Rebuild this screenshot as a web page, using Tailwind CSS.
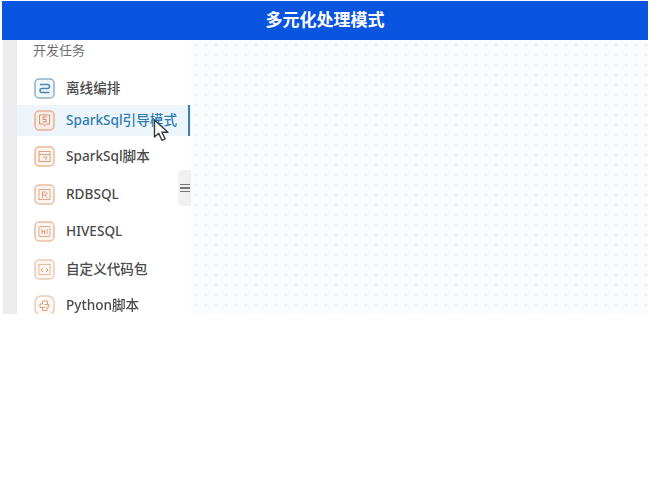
<!DOCTYPE html>
<html lang="en">
<head>
  <meta charset="UTF-8">
  <title>多元化处理模式</title>
  <script src="https://cdn.jsdelivr.net/npm/@tailwindcss/browser@4"></script>
</head>
<body class="bg-white font-['Noto_Sans','Noto_Sans_CJK_SC',sans-serif]">
  <div class="w-[649px] h-[480px] pt-px pl-[2px] pr-px overflow-hidden">
    <header class="h-[39px] bg-[#0a55df] flex items-center justify-center text-white text-[17px] font-bold font-['Liberation_Sans','Noto_Sans_CJK_SC',sans-serif]">多元化处理模式</header>
    <div class="flex h-[274px] overflow-hidden">
      <div class="w-px bg-white"></div>
      <div class="w-[14px] bg-[#ececee]"></div>
      <aside class="relative w-[174px] bg-white text-[13.6px] font-medium text-[#4a4a4a] [filter:blur(0.5px)]">
        <div class="h-[22px] pl-[16px] pt-[2px] text-[13px] font-normal text-[#707070] leading-[17px]">开发任务</div>

        <div class="mt-[10px] h-[33px] flex items-center pl-[17px] gap-[11px]">
          <svg class="w-[21px] h-[21px]" viewBox="0 0 21 21" fill="none" stroke="#8fb0ca" stroke-width="1.500"><rect x="1" y="1" width="19" height="19" rx="4" fill="#f1f6fa"/><path d="M6 6.500h7.500a2 2 0 0 1 0 4H8a2 2 0 0 0 0 4h7.500" stroke="#4f86ae"/></svg>
          <span>离线编排</span>
        </div>

        <div class="relative h-[31px] flex items-center pl-[17px] gap-[11px] bg-[#edf5fa] text-[#2f7db5]">
          <svg class="w-[21px] h-[21px]" viewBox="0 0 21 21" fill="none" stroke="#e3b295" stroke-width="1.500"><rect x="1" y="1" width="19" height="19" rx="4" fill="#f9ece3"/><path d="M5.500 5h10v9h-3l-2 2-2-2h-3z" stroke-width="1" stroke="#cf9775"/><path d="M12.500 7h-3.500v2.500h3V12H8.500" stroke="#c98c6a" stroke-width="1"/></svg>
          <span>SparkSql引导模式</span>
          <div class="absolute right-px top-0 w-[2.500px] h-[31px] bg-[#3d80ae]"></div>
        </div>

        <div class="h-[41px] flex items-center pl-[17px] gap-[11px]">
          <svg class="w-[21px] h-[21px]" viewBox="0 0 21 21" fill="none" stroke="#e8b99c" stroke-width="1.500"><rect x="1" y="1" width="19" height="19" rx="4" fill="#fcf3ed"/><rect x="5" y="5.500" width="11" height="10" stroke="#d9a17f" stroke-width="1"/><path d="M5 8.500h11M9 11h4l-1.500 3" stroke="#d9a17f" stroke-width="1"/></svg>
          <span>SparkSql脚本</span>
        </div>

        <div class="h-[35px] flex items-center pl-[17px] gap-[11px]">
          <svg class="w-[21px] h-[21px]" viewBox="0 0 21 21" fill="none" stroke="#e8bfa5" stroke-width="1.500"><rect x="1" y="1" width="19" height="19" rx="4" fill="#fcf4ee"/><rect x="5" y="5.500" width="11" height="10" stroke="#dcab8d" stroke-width="1"/><path d="M8.500 14V8h3a1.500 1.500 0 0 1 0 3h-3M11 11l2 3" stroke="#d9a17f" stroke-width="1"/></svg>
          <span>RDBSQL</span>
        </div>

        <div class="h-[39px] flex items-center pl-[17px] gap-[11px]">
          <svg class="w-[21px] h-[21px]" viewBox="0 0 21 21" fill="none" stroke="#e8bfa5" stroke-width="1.500"><rect x="1" y="1" width="19" height="19" rx="4" fill="#fcf4ee"/><rect x="5" y="5.500" width="11" height="10" rx="1" stroke="#dcab8d" stroke-width="1"/><path d="M8 8v5M13 8v5M8 10.500h2M10.500 9v4" stroke="#d9a17f" stroke-width="1"/></svg>
          <span>HIVESQL</span>
        </div>

        <div class="h-[36px] flex items-center pl-[17px] gap-[11px]">
          <svg class="w-[21px] h-[21px]" viewBox="0 0 21 21" fill="none" stroke="#ebcbb6" stroke-width="1.500"><rect x="1" y="1" width="19" height="19" rx="4" fill="#fcf6f1"/><rect x="5" y="5.500" width="11" height="10" stroke="#e3bca3" stroke-width="1"/><path d="M9 9l-2 2 2 2M12 9l2 2-2 2" stroke="#d9a17f" stroke-width="1"/></svg>
          <span>自定义代码包</span>
        </div>

        <div class="h-[37px] flex items-center pl-[17px] gap-[11px]">
          <svg class="w-[21px] h-[21px]" viewBox="0 0 21 21" fill="none" stroke="#ebcbb6" stroke-width="1.500"><rect x="1" y="1" width="19" height="19" rx="6" fill="#fdf8f4"/><path d="M13.500 9.500V6h-5v3H6v3.500h5M8.500 12v3.500h4.500V12h2V9.500h-4.500" stroke="#d9a17f" stroke-width="1"/></svg>
          <span>Python脚本</span>
        </div>

        <svg class="absolute left-[136px] top-[79px] w-[17px] h-[23px]" viewBox="0 0 17 23"><path d="M1.500 1v17l4.200-3.700 3.200 7 3.200-1.500-3.200-6.600h6z" fill="#fff" stroke="#3a3a3a" stroke-width="1.400" stroke-linejoin="round"/></svg>

        <div class="absolute right-0 top-[130px] w-[13px] h-[36px] bg-[#f3f1f0] rounded-l-[5px] flex flex-col items-center justify-center gap-[2px]">
          <div class="w-[10px] h-[1.500px] bg-[#777]"></div>
          <div class="w-[10px] h-[1.500px] bg-[#777]"></div>
          <div class="w-[10px] h-[1.500px] bg-[#777]"></div>
        </div>
      </aside>
      <main class="flex-1 bg-[#fbfcfd] bg-[radial-gradient(#eff2f6_1px,transparent_2px)] bg-[length:10px_10px]"></main>
    </div>
  </div>
</body>
</html>
